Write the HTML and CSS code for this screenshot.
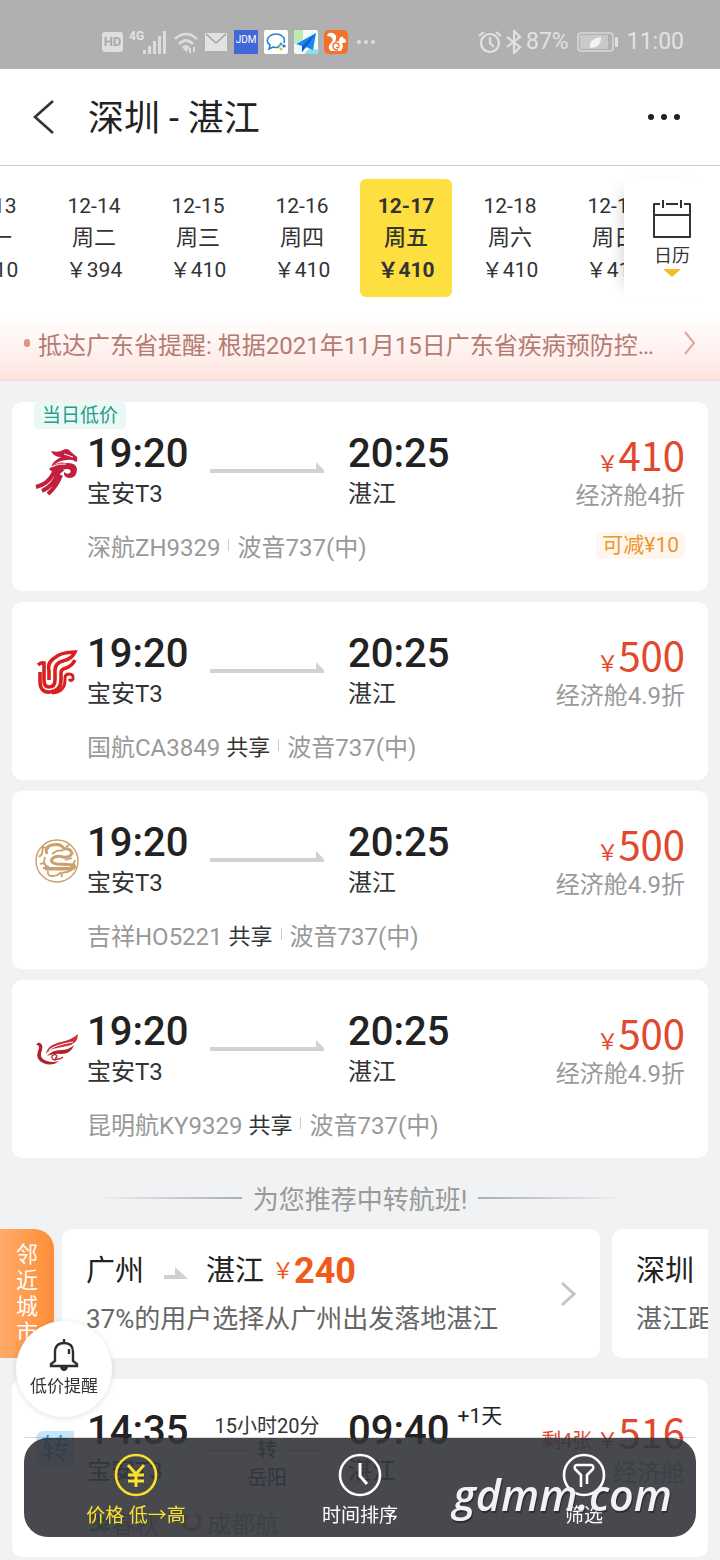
FILE: index.html
```html
<!DOCTYPE html>
<html lang="zh-CN">
<head>
    <meta charset="UTF-8">
    <meta name="viewport" content="width=device-width, initial-scale=1.0">
    <title>深圳 - 湛江</title>
    <link rel="stylesheet" href="styles.css">
</head>
<body>
    <svg class="defs" width="0" height="0">
        <symbol id="arrow" viewBox="0 0 114 12" preserveAspectRatio="none">
            <path d="M0 8h106V1l8 8v3H0z" fill="#d2d2d2"/>
        </symbol>
        <symbol id="arrow-small" viewBox="0 0 24 12">
            <path d="M0 8h11V0l13 12H0z" fill="#cfcfcf"/>
        </symbol>
    </svg>

    <div class="status-bar">
        <div class="status-left">
            <span class="hd">HD</span>
            <span class="signal">
                <span class="net">4G</span>
                <svg width="24" height="24" viewBox="0 0 24 24" fill="#dcdcdc">
                    <path d="M1 20h3v4H1zM6 16h3v8H6zM11 11h3v13h-3zM16 6h3v18h-3zM21 1h3v23h-3z"/>
                </svg>
            </span>
            <svg width="24" height="24" viewBox="0 0 24 24" fill="none" stroke="#dcdcdc" stroke-width="2.6">
                <path d="M1 9Q12-1 23 9M5 14q7-7 14 0"/>
                <path d="M8 17q4-4 8 0l-4 5z" fill="#dcdcdc" stroke="none"/>
                <path d="M16 18v5M20 17v5" stroke-width="2"/>
            </svg>
            <svg width="24" height="24" viewBox="0 0 24 24">
                <rect x="1" y="3" width="22" height="18" fill="#e2e2e2"/>
                <path d="M2 4l10 9 10-9" fill="none" stroke="#a2a2a2" stroke-width="1.6"/>
            </svg>
            <span class="jdm">JDM</span>
            <svg width="24" height="24" viewBox="0 0 24 24">
                <rect width="24" height="24" rx="2" fill="#fff"/>
                <path d="M15 17q-3 1-6 0l-4 2 1-4Q2 12 4 8q3-4 8-4t8 4q1 2 0 5" fill="none" stroke="#2f7fd0" stroke-width="1.6"/>
                <circle cx="17" cy="14" r="1.6" fill="#38a0d8"/>
                <circle cx="20" cy="16" r="1.6" fill="#2a73c8"/>
                <circle cx="17" cy="19" r="1.6" fill="#e5c02c"/>
                <circle cx="15" cy="16" r="1.3" fill="#6cc04a"/>
            </svg>
            <svg width="24" height="24" viewBox="0 0 24 24">
                <rect width="24" height="24" rx="2" fill="#f3fafc"/>
                <path d="M0 0h9v10L0 14z" fill="#bdeab0"/>
                <path d="M10 24l6-6 8 2v4z" fill="#8edcf0"/>
                <path d="M2 14L22 3l-3 17-7-3-4 5v-6z" fill="#1a86ee"/>
                <path d="M22 3L8 16v6l4-5z" fill="#0c5fc4"/>
            </svg>
            <svg width="24" height="24" viewBox="0 0 24 24">
                <rect width="24" height="24" rx="5" fill="#f4712c"/>
                <path d="M3 6q1-4 5-3 5 1 4 6l-1 3 4-1q0-4 3-4l1-1v2q3 1 3 3 0 2-4 2 2 4-1 8H7q-4-3-1-7 4-4 2-6-1-2-5-2z" fill="#fff"/>
                <path d="M14 20q-5 0-5-4 0-3 3-3t3 3-3 1" fill="none" stroke="#f4712c" stroke-width="1.4"/>
            </svg>
            <svg class="status-dots" width="20" height="24" viewBox="0 0 20 24" fill="#dedede">
                <circle cx="3" cy="12" r="2"/><circle cx="10" cy="12" r="2"/><circle cx="17" cy="12" r="2"/>
            </svg>
        </div>
        <div class="status-right">
            <svg width="24" height="24" viewBox="0 0 24 24" fill="none" stroke="#e2e2e2" stroke-width="2.2">
                <circle cx="12" cy="13" r="9"/>
                <path d="M12 7v6l4 4M1 6l5-4M18 2l5 4"/>
            </svg>
            <svg width="16" height="24" viewBox="0 0 16 24" fill="none" stroke="#e2e2e2" stroke-width="2.2">
                <path d="M1 7l13 10-6 6V1l6 6L1 17"/>
            </svg>
            <span>87%</span>
            <svg class="battery" width="42" height="24" viewBox="0 0 42 24">
                <rect x="1" y="3" width="35" height="18" rx="3" fill="none" stroke="#d8d8d8" stroke-width="1.6"/>
                <rect x="3" y="5" width="28" height="14" fill="#c9c9c9"/>
                <path d="M13 18q-2-9 11-11 0 11-11 11z" fill="#f2f2f2"/>
                <rect x="38" y="7" width="3" height="10" rx="1" fill="#e2e2e2"/>
            </svg>
            <span>11:00</span>
        </div>
    </div>

    <header class="header">
        <button class="icon-btn" aria-label="返回">
            <svg width="24" height="36" viewBox="0 0 24 36" fill="none" stroke="#333" stroke-width="2.6"><path d="M21 2L3 18l18 16"/></svg>
        </button>
        <h1>深圳 - 湛江</h1>
        <button class="icon-btn" aria-label="更多">
            <svg width="34" height="8" viewBox="0 0 34 8" fill="#222"><circle cx="4" cy="4" r="3"/><circle cx="17" cy="4" r="3"/><circle cx="30" cy="4" r="3"/></svg>
        </button>
    </header>

    <nav class="dates">
        <div class="date-strip">
            <button class="date"><span>12-13</span><span class="week">周一</span><span>￥410</span></button>
            <button class="date"><span>12-14</span><span class="week">周二</span><span>￥394</span></button>
            <button class="date"><span>12-15</span><span class="week">周三</span><span>￥410</span></button>
            <button class="date"><span>12-16</span><span class="week">周四</span><span>￥410</span></button>
            <button class="date active"><span>12-17</span><span class="week">周五</span><span>￥410</span></button>
            <button class="date"><span>12-18</span><span class="week">周六</span><span>￥410</span></button>
            <button class="date"><span>12-19</span><span class="week">周日</span><span>￥410</span></button>
        </div>
        <button class="calendar">
            <svg width="40" height="40" viewBox="0 0 40 40" fill="none" stroke="#333" stroke-width="2" stroke-linejoin="round">
                <path d="M8 5H2v33h36V5h-6M14 5h12M2 16h36M11 1v8M29 1v8"/>
            </svg>
            <span>日历</span>
            <svg width="18" height="8" viewBox="0 0 18 8"><path d="M0 0h18L9 8z" fill="#f2bd26"/></svg>
        </button>
    </nav>

    <a class="notice" href="#">
        <i class="notice-dot"></i>
        <span class="notice-text">抵达广东省提醒: 根据2021年11月15日广东省疾病预防控制中心通知</span>
        <svg width="12" height="24" viewBox="0 0 12 24" fill="none" stroke="#dfa79f" stroke-width="2"><path d="M1 1l9 11-9 11"/></svg>
    </a>

    <main class="list">
        <article class="flight lowest">
            <span class="low-tag">当日低价</span>
            <!-- 深圳航空 -->
            <svg class="logo" width="44" height="48" viewBox="0 0 44 48">
                <path d="M16 3q8 2 12-1 5-3 8 2l6 5q1 4-1 5-3-3-9-2-8 0-16 7 2-6 10-10-7 0-10-6z" fill="#c21f3f"/>
                <path d="M14 21q8-8 17-6 10-1 11 6 0 9-8 9-6-1-5-6 3 3 6 1 2-3-2-4-6-1-12 6z" fill="#c21f3f"/>
                <path d="M1 39Q13 36 18 26q2-4 7-6M7 43q11-5 15-16 2-4 6-6M13 46q9-8 13-19" fill="none" stroke="#c21f3f" stroke-width="4"/>
                <path d="M29 6l9 3M16 19q8-4 15-3" fill="none" stroke="#fff" stroke-width="1"/>
            </svg>
            <div class="route">
                <div class="stop"><b>19:20</b><span>宝安T3</span></div>
                <svg class="arrow"><use href="#arrow"/></svg>
                <div class="stop"><b>20:25</b><span>湛江</span></div>
                <div class="fare"><strong><small>￥</small>410</strong><span>经济舱4折</span></div>
            </div>
            <div class="meta"><span>深航ZH9329</span><i></i><span>波音737(中)</span><em class="coupon">可减¥10</em></div>
        </article>

        <article class="flight">
            <!-- 国航 -->
            <svg class="logo" width="44" height="48" viewBox="0 0 44 48" fill="none" stroke="#d9201f" stroke-width="3.6">
                <path d="M3 17q3-3 6-2v17q0 7 5 7 6 0 6-7V22q0-7 8-9 9-2 12-9-15 0-22 7-6 5-4 12v9"/>
                <path d="M5 24v9q0 12 10 11 11-1 11-12v-7q0-4 5-5 6-2 9-8"/>
                <path d="M17 45q13-1 13-13v-2q0-4 4-4 5 0 4 5-2 3-4 0" stroke-width="3"/>
            </svg>
            <div class="route">
                <div class="stop"><b>19:20</b><span>宝安T3</span></div>
                <svg class="arrow"><use href="#arrow"/></svg>
                <div class="stop"><b>20:25</b><span>湛江</span></div>
                <div class="fare"><strong><small>￥</small>500</strong><span>经济舱4.9折</span></div>
            </div>
            <div class="meta"><span>国航CA3849</span><span class="share">共享</span><i></i><span>波音737(中)</span></div>
        </article>

        <article class="flight">
            <!-- 吉祥航空 -->
            <svg class="logo" width="44" height="48" viewBox="0 0 44 48" fill="none" stroke="#c9a06c">
                <circle cx="22" cy="24" r="21" stroke-width="1.4"/>
                <path d="M12 17q-3-7 5-9 9-2 12 4 6-1 8 4-2 5-9 4-7-2-11 2-2 4 5 5l17 1q2 3-3 4H10" stroke-width="3"/>
                <path d="M14 12l-6-2-1 7-3 3M17 17q6-5 11-3M10 20q-3 8 4 10M5 27q5-2 6 3M8 31h27q3-2 5-8M13 34q-1 5 4 5 6 0 9-4M27 40q-2-5 5-5l5-2M31 10l3-2M37 21l-7 2" stroke-width="1.8"/>
            </svg>
            <div class="route">
                <div class="stop"><b>19:20</b><span>宝安T3</span></div>
                <svg class="arrow"><use href="#arrow"/></svg>
                <div class="stop"><b>20:25</b><span>湛江</span></div>
                <div class="fare"><strong><small>￥</small>500</strong><span>经济舱4.9折</span></div>
            </div>
            <div class="meta"><span>吉祥HO5221</span><span class="share">共享</span><i></i><span>波音737(中)</span></div>
        </article>

        <article class="flight">
            <!-- 昆明航空 -->
            <svg class="logo" width="44" height="48" viewBox="0 0 44 48">
                <path d="M1 19q3-5 6 0 1 3-1 8-1 6 6 8 6 2 12 0-7 6-16 2-8-4-5-12 2-4 0-6z" fill="#b0222c"/>
                <path d="M11 28q1-9 15-12 12-3 17-8 0 10-11 12l-10 2q-8 1-11 6z" fill="#c8323c"/>
                <path d="M12 30q5-6 14-6 8 0 13-5-3 9-13 9-7-1-14 2z" fill="#b0222c"/>
                <path d="M21 34q-5 0-4-4 3-3 5 0 0 2-2 2M20 33q5 1 8-2" fill="none" stroke="#c02a35" stroke-width="1.3"/>
                <path d="M14 24q6-5 24-8" fill="none" stroke="#fff" stroke-width="1"/>
            </svg>
            <div class="route">
                <div class="stop"><b>19:20</b><span>宝安T3</span></div>
                <svg class="arrow"><use href="#arrow"/></svg>
                <div class="stop"><b>20:25</b><span>湛江</span></div>
                <div class="fare"><strong><small>￥</small>500</strong><span>经济舱4.9折</span></div>
            </div>
            <div class="meta"><span>昆明航KY9329</span><span class="share">共享</span><i></i><span>波音737(中)</span></div>
        </article>

        <h2 class="divider">为您推荐中转航班!</h2>

        <section class="nearby">
            <div class="nearby-tag">邻近城市</div>
            <div class="nearby-cards">
                <a class="city-card" href="#">
                    <div class="city-info">
                        <p class="city-route">广州<svg width="24" height="12"><use href="#arrow-small"/></svg>湛江<small>￥</small><b>240</b></p>
                        <p class="city-desc">37%的用户选择从广州出发落地湛江</p>
                    </div>
                    <svg width="16" height="26" viewBox="0 0 16 26" fill="none" stroke="#c4c4c4" stroke-width="3"><path d="M2 2l12 11L2 24"/></svg>
                </a>
                <a class="city-card" href="#">
                    <div class="city-info">
                        <p class="city-route">深圳</p>
                        <p class="city-desc">湛江距离较近</p>
                    </div>
                </a>
            </div>
        </section>

        <article class="flight transfer">
            <span class="logo transfer-tag">转</span>
            <div class="route">
                <div class="stop"><b>14:35</b><span>宝安T3</span></div>
                <div class="via"><span>15小时20分</span><span class="via-mark">转</span><span class="via-city">岳阳</span></div>
                <div class="stop"><b>09:40<sup>+1天</sup></b><span>湛江</span></div>
                <div class="fare"><strong><span class="left">剩4张</span><small>￥</small>516</strong><span>经济舱</span></div>
            </div>
            <div class="meta">
                <svg width="24" height="22" viewBox="0 0 24 22" fill="none" stroke="#3fae6a" stroke-width="3"><path d="M2 5h8q4 4-1 7H3M3 18q7 3 9-3 3-9 8-7 3 4-2 6-5 2-3 5 5 1 7-3"/></svg>
                <span>春秋</span>
                <svg class="second" width="22" height="22" viewBox="0 0 22 22" fill="none" stroke="#e0a030" stroke-width="4"><path d="M6 4q-6 7 0 13 7 4 12-2 3-9-4-12"/></svg>
                <span>成都航</span>
            </div>
        </article>
    </main>

    <button class="price-alert">
        <svg width="30" height="34" viewBox="0 0 30 34" fill="none" stroke="#2d2d2d" stroke-width="2.4">
            <path d="M15 1v3M6 14q0-9 9-9t9 9v9l4 3v2H2v-2l4-3zM20 11v5"/>
            <path d="M11 29h8q-1 4-4 4t-4-4z" fill="#2d2d2d" stroke="none"/>
        </svg>
        <span>低价提醒</span>
    </button>

    <div class="toolbar">
        <button class="active">
            <svg width="44" height="44" viewBox="0 0 44 44" fill="none" stroke="currentColor" stroke-width="2.6">
                <circle cx="22" cy="22" r="20"/>
                <path d="M14 12l8 9 8-9M22 21v13M14 22h16M14 28h16" stroke-width="3"/>
            </svg>
            <span>价格 低→高</span>
        </button>
        <button>
            <svg width="44" height="44" viewBox="0 0 44 44" fill="none" stroke="currentColor" stroke-width="2.6">
                <circle cx="22" cy="22" r="20"/>
                <path d="M22 10v13l7 8" stroke-width="3"/>
            </svg>
            <span>时间排序</span>
        </button>
        <button>
            <svg width="44" height="44" viewBox="0 0 44 44" fill="none" stroke="currentColor" stroke-width="2.6" stroke-linejoin="round">
                <circle cx="22" cy="22" r="20"/>
                <path d="M19 34V22l-6-6q-1-4 2-4h14q3 0 2 4l-6 6v9"/>
            </svg>
            <span>筛选</span>
        </button>
        <span class="site-mark">gdmm.com</span>
    </div>
</body>
</html>
```
FILE: styles.css
```css
* {
    box-sizing: border-box;
}
body {
    display: flex;
    flex-direction: column;
    height: 100vh;
    margin: 0;
    overflow: hidden;
    background-color: #f0f2f4;
    color: #333;
    font-family: Roboto, "Noto Sans CJK SC", sans-serif;
    font-size: 24px;
}
h1, h2, p {
    margin: 0;
    font-weight: 400;
}
button {
    padding: 0;
    border: none;
    background: none;
    color: inherit;
    font: inherit;
    cursor: pointer;
}
a {
    color: inherit;
    text-decoration: none;
}
svg {
    display: block;
    flex: none;
}
.defs {
    position: absolute;
}

/* 状态栏 */
.status-bar {
    display: flex;
    flex: none;
    justify-content: space-between;
    align-items: center;
    height: 69px;
    padding: 14px 36px 0 102px;
    background-color: #b0b0b0;
    color: #e2e2e2;
    font-size: 23px;
}
.status-left, .status-right {
    display: flex;
    align-items: center;
    gap: 6px;
}
.status-right {
    gap: 4px;
}
.battery {
    margin: 0 4px;
}
.status-dots {
    margin-left: 2px;
}
.hd {
    width: 21px;
    border-radius: 3px;
    background-color: #dedede;
    color: #aaa;
    font-size: 13px;
    font-weight: 700;
    line-height: 20px;
    text-align: center;
}
.signal {
    display: flex;
    margin-right: 2px;
}
.signal svg {
    margin-left: -2px;
}
.net {
    font-size: 12px;
    font-weight: 700;
    line-height: 12px;
}
.jdm {
    width: 24px;
    height: 24px;
    border-bottom: 5px solid #4168d8;
    background-color: #4168d8;
    color: #fff;
    font-size: 10px;
    line-height: 20px;
    text-align: center;
}

/* 标题 */
.header {
    display: flex;
    flex: none;
    align-items: center;
    height: 97px;
    padding: 0 39px 0 32px;
    border-bottom: 1px solid #ccc;
    background-color: #fff;
}
.header h1 {
    flex: 1;
    margin-left: 32px;
    padding-top: 4px;
    color: #222;
    font-size: 36px;
    line-height: 48px;
}

/* 日期 */
.dates {
    display: flex;
    flex: none;
    padding: 13px 0 19px;
    background-color: #fff;
}
.date-strip {
    display: flex;
    flex: 1;
    gap: 12px;
    min-width: 0;
    overflow: hidden;
}
.date {
    display: flex;
    flex: none;
    flex-direction: column;
    align-items: center;
    width: 92px;
    padding: 11px 0;
    border-radius: 6px;
    font-size: 21px;
    line-height: 32px;
}
.date:first-child {
    margin-left: -56px;
}
.week {
    font-size: 22px;
}
.date.active {
    background-color: #fddf3f;
    font-weight: 700;
}
.date.active .week {
    font-weight: 500;
}
.calendar {
    display: flex;
    flex: none;
    flex-direction: column;
    align-items: center;
    width: 96px;
    padding-top: 20px;
    box-shadow: -12px 0 16px -12px rgba(0, 0, 0, 0.2);
    font-size: 18px;
    line-height: 26px;
}
.calendar span {
    margin-top: 4px;
}

/* 提醒 */
.notice {
    display: flex;
    flex: none;
    align-items: center;
    height: 65px;
    padding: 0 24px 10px;
    border-bottom: 1px solid #f5dcd8;
    background: linear-gradient(#fff, #ffedea 70%, #fde3dd);
    color: #b47b72;
}
.notice-dot {
    flex: none;
    width: 6px;
    height: 8px;
    margin-right: 8px;
    border-radius: 3px;
    background-color: #dd9388;
}
.notice-text {
    flex: 1;
    margin-right: 30px;
    overflow: hidden;
    text-overflow: ellipsis;
    white-space: nowrap;
}

/* 航班列表 */
.list {
    display: flex;
    flex: 1;
    flex-direction: column;
    gap: 11px;
    min-height: 0;
    padding-top: 21px;
    overflow-y: auto;
    scrollbar-width: none;
}
.flight {
    position: relative;
    flex: none;
    margin: 0 12px;
    padding: 30px 23px 19px 75px;
    border-radius: 10px;
    background-color: #fff;
}
.lowest {
    padding-bottom: 30px;
}
.low-tag {
    position: absolute;
    top: 0;
    left: 22px;
    padding: 0 8px;
    border-radius: 4px;
    background-color: #ebf9f5;
    color: #269c8b;
    font-size: 19px;
    line-height: 27px;
}
.logo {
    position: absolute;
    top: 46px;
    left: 23px;
}
.route {
    display: grid;
    grid-template-columns: 99px 114px auto 1fr;
    gap: 24px;
    height: 78px;
}
.stop, .fare {
    display: flex;
    flex-direction: column;
    gap: 2px;
    line-height: 32px;
}
.stop b {
    color: #222;
    font-size: 40px;
    font-weight: 500;
    line-height: 44px;
}
.stop sup {
    position: absolute;
    margin-left: 8px;
    font-size: 21px;
    font-weight: 400;
    line-height: 14px;
}
.arrow {
    width: 100%;
    height: 12px;
    margin-top: 29px;
}
.fare {
    align-items: flex-end;
    gap: 4px;
    color: #999;
    white-space: nowrap;
}
.fare strong {
    height: 44px;
    color: #e2482d;
    font-family: "Noto Sans CJK SC", sans-serif;
    font-size: 40px;
    font-weight: 400;
    line-height: 44px;
}
.fare small {
    font-size: 22px;
}
.left {
    margin-right: 4px;
    font-size: 20px;
}
.meta {
    display: flex;
    align-items: center;
    height: 32px;
    margin-top: 19px;
    color: #999;
}
.meta i {
    width: 1px;
    height: 12px;
    margin: 0 8px;
    background-color: #ccc;
}
.share {
    margin-left: 6px;
    color: #333;
    font-size: 22px;
}
.coupon {
    margin-left: auto;
    padding: 0 6px;
    border-radius: 6px;
    background-color: #fff6ee;
    color: #ee962f;
    font-size: 21px;
    font-style: normal;
    line-height: 27px;
}

/* 中转推荐 */
.divider {
    display: flex;
    flex: none;
    justify-content: center;
    align-items: center;
    gap: 11px;
    height: 49px;
    padding: 8px 95px 0;
    color: #999;
    font-size: 26px;
    white-space: nowrap;
}
.divider::before, .divider::after {
    content: "";
    flex: 1;
    height: 2px;
    background: linear-gradient(to right, transparent, #aaadb0);
}
.divider::after {
    background: linear-gradient(to left, transparent, #aaadb0);
}
.nearby {
    display: flex;
    flex: none;
    gap: 8px;
    margin-bottom: 10px;
    padding-right: 12px;
}
.nearby-tag {
    flex: none;
    width: 54px;
    padding: 13px 16px 0;
    border-radius: 0 20px 0 0;
    background: linear-gradient(to right, #ffab68, #fd8d38);
    color: #fff;
    font-size: 22px;
    line-height: 26px;
}
.nearby-cards {
    display: flex;
    flex: 1;
    gap: 12px;
    min-width: 0;
    overflow: hidden;
}
.city-card {
    display: flex;
    flex: none;
    align-items: center;
    width: 538px;
    padding: 20px 24px;
    border-radius: 10px;
    background-color: #fff;
}
.city-info {
    flex: 1;
}
.city-route {
    display: flex;
    align-items: center;
    color: #222;
    font-size: 29px;
    line-height: 44px;
}
.city-route svg {
    margin: 4px 18px 0 20px;
}
.city-route small {
    margin-left: 8px;
    color: #f05a1a;
    font-size: 22px;
}
.city-route b {
    color: #f05a1a;
    font-size: 36px;
    font-weight: 700;
}
.city-desc {
    margin-top: 7px;
    color: #666;
    font-size: 26px;
    line-height: 38px;
    white-space: nowrap;
}
.transfer-tag {
    top: 52px;
    left: 24px;
    width: 38px;
    border-radius: 8px 0 8px 8px;
    background-color: #c5e5fa;
    color: #3a9ce0;
    font-size: 28px;
    line-height: 38px;
    text-align: center;
}
.via {
    display: flex;
    flex-direction: column;
    align-items: center;
    padding-top: 4px;
    font-size: 20px;
    line-height: 26px;
    white-space: nowrap;
}
.via-mark {
    display: flex;
    align-items: center;
    gap: 6px;
    width: 100%;
    line-height: 22px;
}
.via-mark::before, .via-mark::after {
    content: "";
    flex: 1;
    height: 3px;
    background-color: #d2d2d2;
}
.via-city {
    margin-top: 4px;
}
.meta .second {
    margin: 0 4px 0 22px;
}

/* 悬浮按钮 */
.price-alert {
    position: fixed;
    bottom: 143px;
    left: 16px;
    display: flex;
    flex-direction: column;
    justify-content: center;
    align-items: center;
    width: 96px;
    height: 96px;
    border-radius: 50%;
    background-color: #fff;
    box-shadow: 0 1px 6px rgba(0, 0, 0, 0.12);
    font-size: 17px;
    line-height: 28px;
}
.toolbar {
    position: fixed;
    right: 24px;
    bottom: 23px;
    left: 24px;
    display: flex;
    padding: 15px 0 7px;
    border-radius: 24px;
    background-color: rgba(51, 53, 60, 0.9);
    color: #fff;
}
.toolbar::before {
    content: "";
    position: absolute;
    top: -1px;
    right: 0;
    left: 0;
    height: 1px;
    background-color: rgba(0, 0, 0, 0.15);
}
.toolbar button {
    display: flex;
    flex: 1;
    flex-direction: column;
    align-items: center;
    gap: 5px;
    font-size: 19px;
    line-height: 28px;
}
.toolbar .active {
    color: #fbe02c;
}
.site-mark {
    position: absolute;
    right: 24px;
    bottom: 14px;
    color: #f2f2f2;
    font-family: "Open Sans", sans-serif;
    font-size: 43px;
    font-style: italic;
    font-weight: 600;
    line-height: 56px;
    text-shadow: 1px 2px 1px rgba(0, 0, 0, 0.4);
    pointer-events: none;
}
```
